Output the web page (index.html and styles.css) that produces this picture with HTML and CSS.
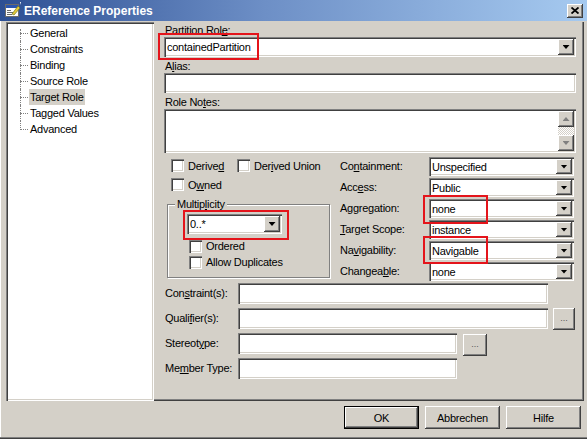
FILE: index.html
```html
<!DOCTYPE html>
<html>
<head>
<meta charset="utf-8">
<title>EReference Properties</title>
<link rel="stylesheet" href="styles.css">
</head>
<body>
<div class="win">
  <div class="titlebar">
    <svg class="ticon" width="16" height="16" viewBox="0 0 16 16">
      <rect x="0.5" y="2.5" width="13" height="12" fill="#fff" stroke="#6b6b6b"/>
      <rect x="1" y="3" width="12" height="3" fill="#2a55b0"/>
      <rect x="2" y="8" width="4" height="1" fill="#6b6b6b"/>
      <rect x="2" y="10" width="6" height="1" fill="#6b6b6b"/>
      <rect x="2" y="12" width="5" height="1" fill="#6b6b6b"/>
      <path d="M7 12 L13 4 L15 6 L9 13 Z" fill="#e8c93a" stroke="#6a7a20" stroke-width="0.7"/>
      <path d="M15 0 L16 0 L16 3 Z" fill="#fff"/>
    </svg>
    <span class="ttext">EReference Properties</span>
    <div class="close">
      <svg width="8" height="7" viewBox="0 0 8 7"><path d="M0.5 0.5 L7.5 6.5 M7.5 0.5 L0.5 6.5" stroke="#000" stroke-width="1.8"/></svg>
    </div>
  </div>

  <div class="main">
    <div class="tree">
      <div class="ti first"><span>General</span></div>
      <div class="ti"><span>Constraints</span></div>
      <div class="ti"><span>Binding</span></div>
      <div class="ti"><span>Source Role</span></div>
      <div class="ti"><span class="sel">Target Role</span></div>
      <div class="ti"><span>Tagged Values</span></div>
      <div class="ti last"><span>Advanced</span></div>
    </div>

    <div class="page">
      <div class="lbl">Partition Rol<u>e</u>:</div>
      <div class="combo sunk wide"><span class="val">containedPartition</span><span class="drop raised"></span></div>
      <div class="lbl gap">A<u>l</u>ias:</div>
      <div class="edit sunk wide"></div>
      <div class="lbl gap">Role No<u>t</u>es:</div>
      <div class="memo sunk">
        <div class="vscroll">
          <span class="sbtn raised up"></span>
          <span class="track"></span>
          <span class="sbtn raised down"></span>
        </div>
      </div>

      <div class="mid">
        <div class="leftcol">
          <div class="cbrow">
            <label class="cb first"><span class="box sunk"></span><span class="ct">Derive<u>d</u></span></label>
            <label class="cb"><span class="box sunk"></span><span class="ct">Der<u>i</u>ved Union</span></label>
          </div>
          <div class="cbrow">
            <label class="cb"><span class="box sunk"></span><span class="ct">O<u>w</u>ned</span></label>
          </div>
          <div class="group">
            <span class="legend">Multip<u>l</u>icity</span>
            <div class="combo sunk mult"><span class="val">0..*</span><span class="drop raised"></span></div>
            <div class="subrow first"><label class="cb"><span class="box sunk"></span><span class="ct">Ordered</span></label></div>
            <div class="subrow"><label class="cb"><span class="box sunk"></span><span class="ct">Allow Duplicates</span></label></div>
          </div>
        </div>

        <div class="rightcol">
          <div class="rl">Co<u>n</u>tainment:</div>
          <div class="combo sunk sm"><span class="val">Unspecified</span><span class="drop raised"></span></div>
          <div class="rl">Acc<u>e</u>ss:</div>
          <div class="combo sunk sm"><span class="val">Public</span><span class="drop raised"></span></div>
          <div class="rl">A<u>g</u>gregation:</div>
          <div class="combo sunk sm"><span class="val">none</span><span class="drop raised"></span></div>
          <div class="rl"><u>T</u>arget Scope:</div>
          <div class="combo sunk sm"><span class="val">instance</span><span class="drop raised"></span></div>
          <div class="rl">Na<u>v</u>igability:</div>
          <div class="combo sunk sm"><span class="val">Navigable</span><span class="drop raised"></span></div>
          <div class="rl">Changea<u>b</u>le:</div>
          <div class="combo sunk sm"><span class="val">none</span><span class="drop raised"></span></div>
        </div>
      </div>

      <div class="fields">
        <div class="frow">
          <span class="fl">Con<u>s</u>traint(s):</span>
          <span class="edit sunk longin"></span>
        </div>
        <div class="frow">
          <span class="fl">Quali<u>f</u>ier(s):</span>
          <span class="edit sunk longin"></span>
          <span class="dots raised q">...</span>
        </div>
        <div class="frow">
          <span class="fl">Stereot<u>y</u>pe:</span>
          <span class="edit sunk shortin"></span>
          <span class="dots raised s">...</span>
        </div>
        <div class="frow">
          <span class="fl">Me<u>m</u>ber Type:</span>
          <span class="edit sunk shortin"></span>
        </div>
      </div>

      <div class="mark m1"></div>
      <div class="mark m2"></div>
      <div class="mark m3"></div>
      <div class="mark m4"></div>
    </div>
  </div>

  <div class="buttons">
    <div class="btn raised def">OK</div>
    <div class="btn raised">Abbrechen</div>
    <div class="btn raised">Hilfe</div>
  </div>
</div>
</body>
</html>
```

FILE: styles.css
```css
* { box-sizing: border-box; }
html, body { margin: 0; padding: 0; }
body {
  width: 587px;
  height: 439px;
  overflow: hidden;
  background: #d4d0c8;
  font-family: "Liberation Sans", Arial, sans-serif;
  font-size: 11px;
  letter-spacing: -0.25px;
  color: #000;
}
u { text-decoration: underline; text-underline-offset: 1px; }

.win {
  width: 587px;
  height: 439px;
  display: flex;
  flex-direction: column;
  background: #d4d0c8;
  border-bottom: 1px solid #404040;
  box-shadow: inset 0 -1px 0 #808080, inset 1px 0 0 #fff;
}

/* title bar */
.titlebar {
  height: 21px;
  flex: none;
  display: flex;
  align-items: center;
  padding-left: 5px;
  background: linear-gradient(to right, #2d4f93 0%, #6d8fc6 45%, #a6caf0 100%);
}
.ticon { flex: none; margin-right: 3px; margin-top: -1px; }
.ttext {
  color: #fff;
  font-weight: bold;
  font-size: 12px;
  letter-spacing: 0;
}
.close {
  margin-left: auto;
  margin-right: 4px;
  width: 16px;
  height: 14px;
  display: flex;
  align-items: center;
  justify-content: center;
  background: #d4d0c8;
  box-shadow: inset -1px -1px #404040, inset 1px 1px #fff, inset -2px -2px #808080;
}

/* main row */
.main {
  display: flex;
  margin-top: 1px;
  height: 379px;
  flex: none;
  padding-left: 6px;
}

.tree {
  width: 148px;
  height: 379px;
  flex: none;
  background: #fff;
  padding-top: 3px;
  box-shadow: inset 1px 1px #808080, inset 2px 2px #404040, inset -1px -1px #fff, inset -2px -2px #d4d0c8;
}
.ti {
  position: relative;
  height: 16px;
  padding-left: 23px;
}
.ti span {
  display: inline-block;
  height: 16px;
  line-height: 16px;
  padding: 0 1px;
}
.ti span.sel { background: #d4d0c8; }
.ti::before {
  content: "";
  position: absolute;
  left: 14px;
  top: 8px;
  width: 8px;
  border-top: 1px dotted #808080;
}
.ti::after {
  content: "";
  position: absolute;
  left: 14px;
  top: 0;
  height: 16px;
  border-left: 1px dotted #808080;
}
.ti.first::after { top: 4px; height: 12px; }
.ti.last::after { height: 9px; }

/* property page */
.page {
  position: relative;
  width: 430px;
  height: 379px;
  flex: none;
  padding: 2px 8px 0 10px;
  box-shadow: inset -1px -1px #404040, inset -2px -2px #808080;
}

.sunk {
  background: #fff;
  box-shadow: inset 1px 1px #808080, inset 2px 2px #404040, inset -1px -1px #fff, inset -2px -2px #d4d0c8;
}
.raised {
  background: #d4d0c8;
  box-shadow: inset -1px -1px #404040, inset 1px 1px #fff, inset -2px -2px #808080, inset 2px 2px #d4d0c8;
}

.lbl {
  height: 13px;
  line-height: 13px;
  padding-left: 1px;
}
.lbl.gap { margin-top: 3px; }

.combo {
  display: flex;
  align-items: center;
  padding: 2px;
  height: 20px;
}
.combo .val {
  padding-left: 1px;
  white-space: nowrap;
  flex: 1;
  line-height: 14px;
}
.drop {
  flex: none;
  width: 16px;
  height: 100%;
  display: flex;
  align-items: center;
  justify-content: center;
}
.drop::after {
  content: "";
  width: 7px;
  height: 4px;
  background: #000;
  clip-path: polygon(0 0, 100% 0, 50% 100%);
}
.wide { width: 412px; }
.edit { display: block; height: 20px; }

.memo {
  width: 412px;
  height: 44px;
  padding: 2px;
  display: flex;
  justify-content: flex-end;
}
.vscroll {
  width: 16px;
  height: 40px;
  display: flex;
  flex-direction: column;
}
.sbtn {
  height: 16px;
  flex: none;
  display: flex;
  align-items: center;
  justify-content: center;
}
.sbtn::after {
  content: "";
  width: 7px;
  height: 4px;
  background: #808080;
  filter: drop-shadow(1px 1px 0 #fff);
}
.sbtn.up::after { clip-path: polygon(50% 0, 100% 100%, 0 100%); }
.sbtn.down::after { clip-path: polygon(0 0, 100% 0, 50% 100%); }
.track {
  flex: 1;
  background: repeating-conic-gradient(#d4d0c8 0 25%, #fff 0 50%) 0 0 / 2px 2px;
}

/* middle area */
.mid {
  margin-top: 3px;
  display: grid;
  grid-template-columns: 166px 234px;
  column-gap: 10px;
  align-items: start;
}
.cbrow {
  height: 19px;
  display: flex;
  align-items: center;
}
.cb {
  display: inline-flex;
  align-items: center;
  gap: 4px;
  white-space: nowrap;
}
.cb .ct { white-space: nowrap; }
.cbrow .cb { margin-left: 7px; }
.cbrow .cb.first { width: 59px; }
.box {
  width: 13px;
  height: 13px;
  flex: none;
}

.group {
  position: relative;
  margin: 10px 0 0 3px;
  width: 163px;
  height: 74px;
  border: 1px solid #808080;
  box-shadow: inset 1px 1px 0 #fff, 1px 1px 0 #fff;
  padding: 9px 0 0 19px;
}
.group .legend {
  position: absolute;
  top: -7px;
  left: 7px;
  padding: 0 2px;
  line-height: 13px;
  background: #d4d0c8;
}
.mult { width: 95px; }
.subrow {
  height: 16px;
  display: flex;
  align-items: center;
  padding-left: 2px;
}
.subrow.first { margin-top: 4px; }

.rightcol {
  padding-top: 1px;
  display: grid;
  grid-template-columns: 89px 145px;
  grid-auto-rows: 19px;
  row-gap: 2px;
}
.rl { line-height: 19px; }
.combo.sm { height: 19px; }
.combo.sm .val { padding-left: 1px; }

/* bottom fields */
.fields {
  margin-top: 2px;
  display: flex;
  flex-direction: column;
}
.frow {
  height: 25px;
  display: flex;
  align-items: flex-start;
}
.fl {
  width: 74px;
  flex: none;
  padding-left: 1px;
  line-height: 21px;
}
.frow .edit { height: 21px; flex: none; }
.longin { width: 310px; }
.shortin { width: 219px; }
.dots {
  flex: none;
  height: 22px;
  display: flex;
  align-items: center;
  justify-content: center;
  font-size: 9px;
  color: #555;
  letter-spacing: 0;
  padding-bottom: 2px;
}
.dots.q { width: 22px; margin-left: 5px; }
.dots.s { width: 24px; margin-left: 6px; margin-top: 1px; }

/* red annotation boxes */
.mark {
  position: absolute;
  border: 2px solid #e4141b;
}
.m1 { left: 4px; top: 11px; width: 101px; height: 27px; }
.m2 { left: 29px; top: 188px; width: 106px; height: 30px; }
.m3 { left: 269px; top: 173px; width: 65px; height: 29px; }
.m4 { left: 269px; top: 214px; width: 65px; height: 28px; }

/* dialog buttons */
.buttons {
  display: flex;
  justify-content: flex-end;
  gap: 6px;
  padding: 5px 6px 0 0;
}
.btn {
  width: 75px;
  height: 23px;
  display: flex;
  align-items: center;
  justify-content: center;
}
.btn.def {
  border: 1px solid #000;
  box-shadow: inset -1px -1px #404040, inset 1px 1px #fff, inset -2px -2px #808080;
}
```
